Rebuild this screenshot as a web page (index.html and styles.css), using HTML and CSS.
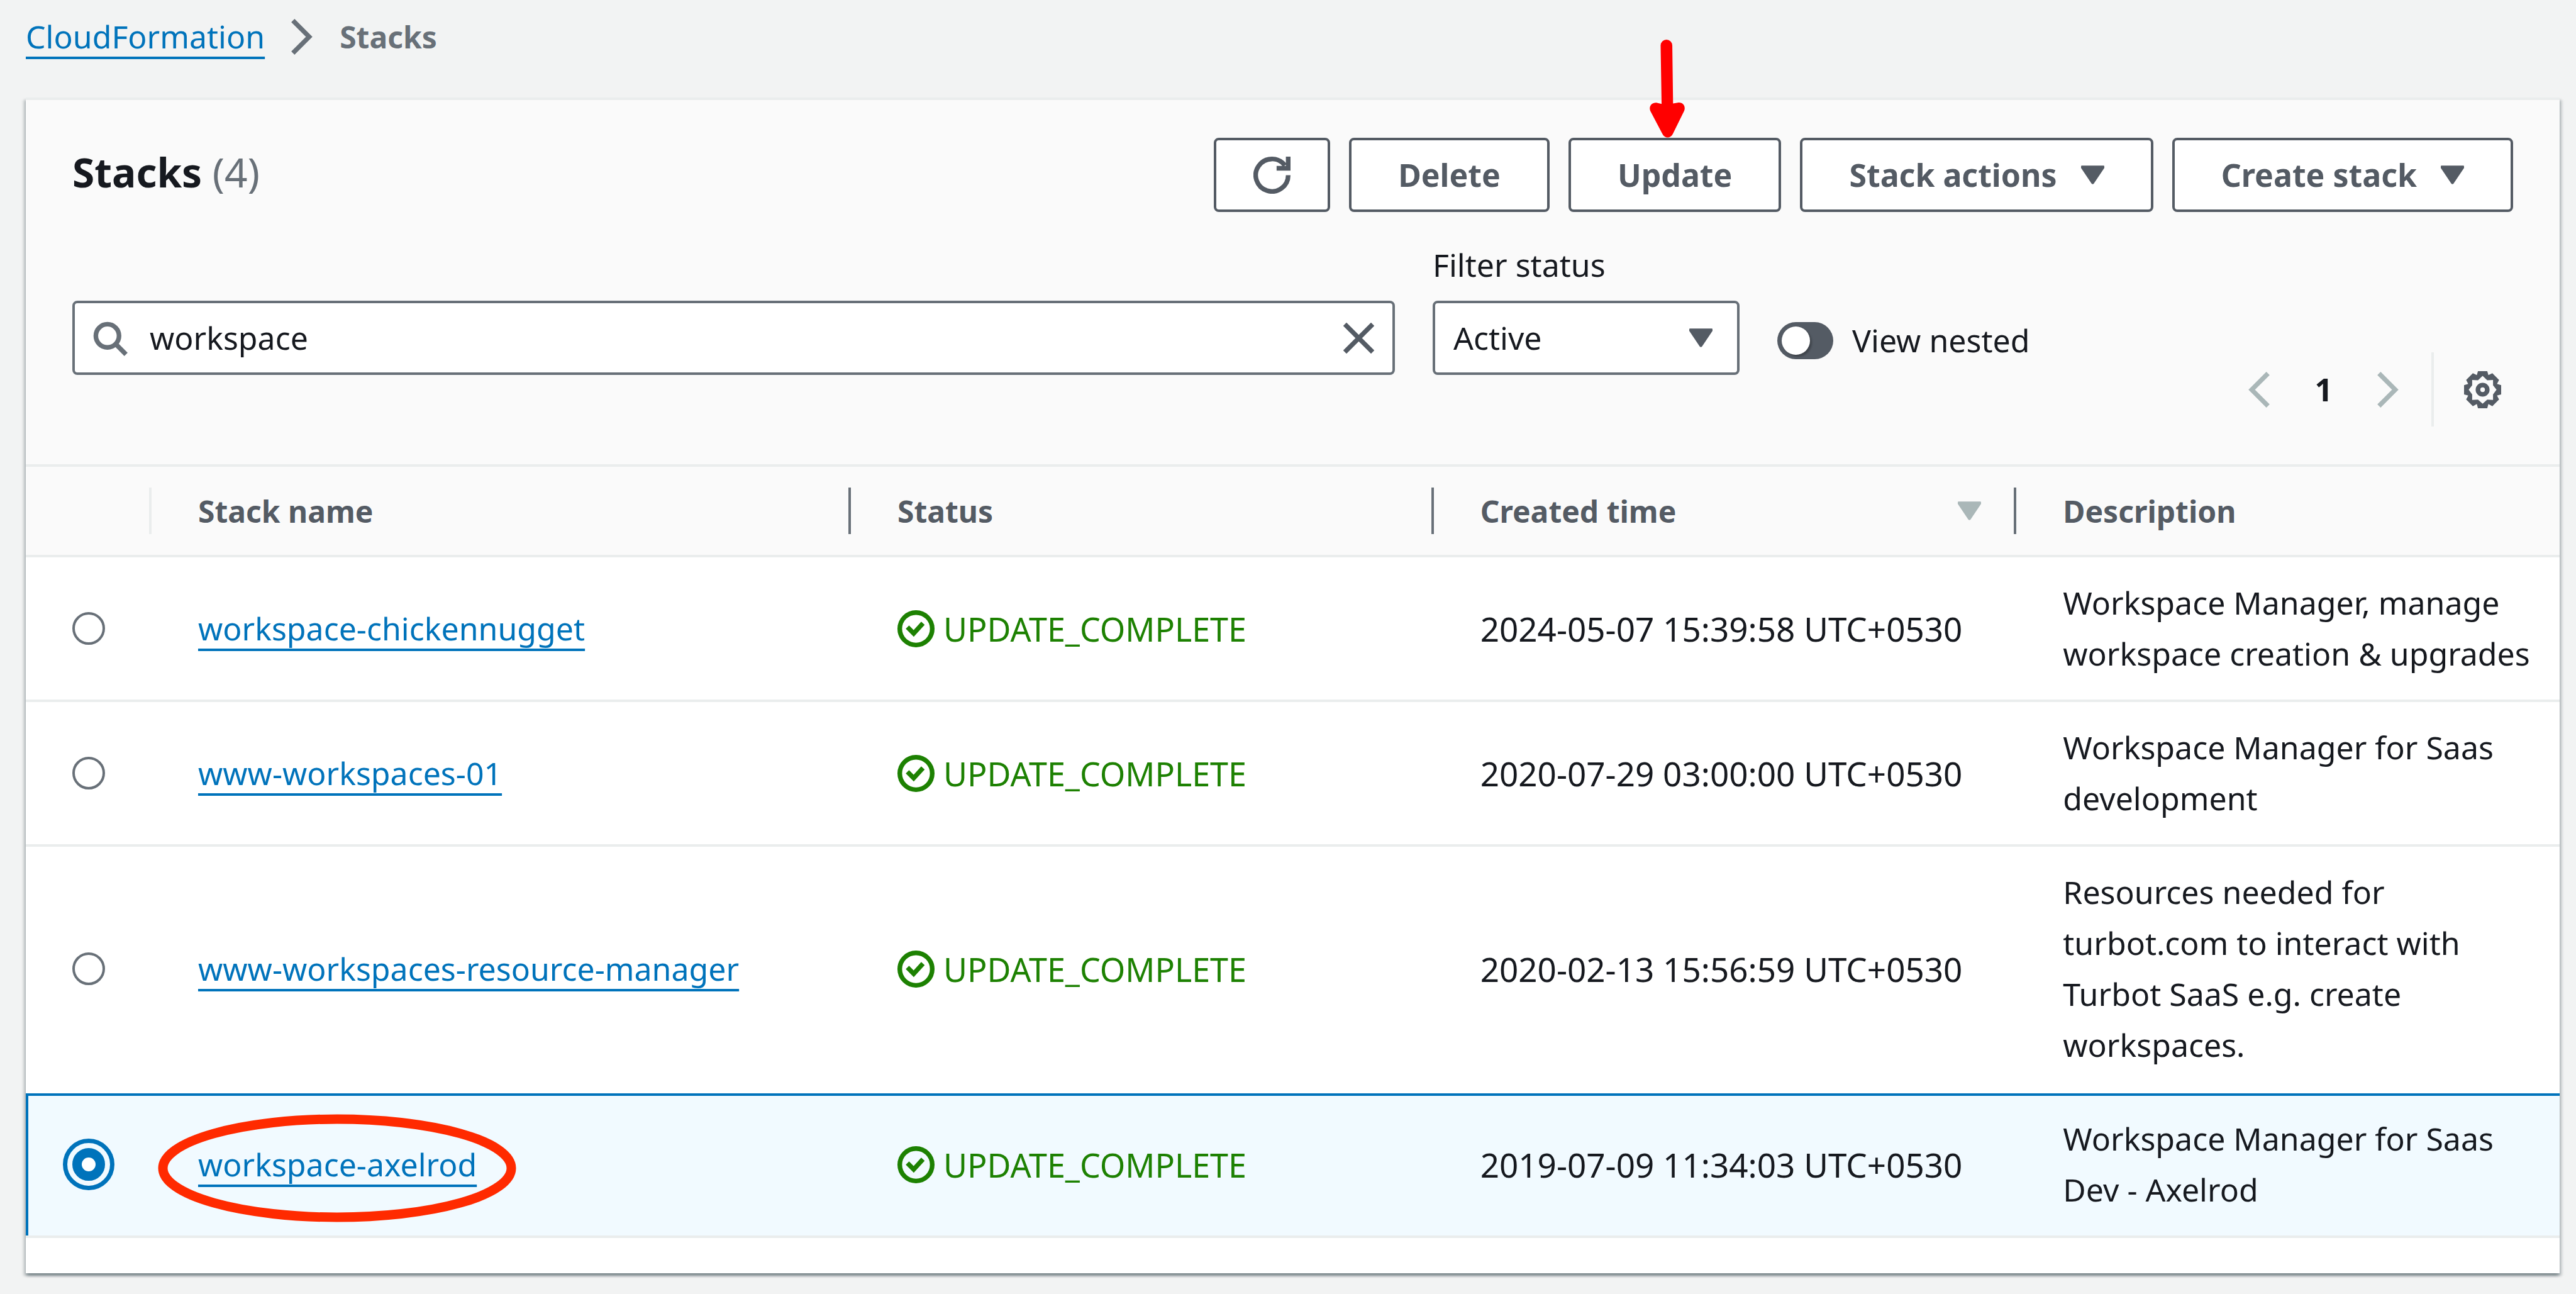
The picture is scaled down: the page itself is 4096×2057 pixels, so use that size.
FILE: index.html
```html
<!DOCTYPE html>
<html lang="en">
<head>
<meta charset="utf-8">
<title>CloudFormation - Stacks</title>
<link rel="stylesheet" href="styles.css">
</head>
<body>
<svg class="sprite" aria-hidden="true">
  <symbol id="caret" viewBox="0 0 10 8"><path d="M.3 0h9.4q.3 0 .3.4v.6L5.5 7.7q-.5.6-1 0L0 1V.4Q0 0 .3 0z"/></symbol>
  <symbol id="next" viewBox="3 0 10 16"><path d="M4 1l7 7-7 7" fill="none" stroke="currentColor" stroke-width="2"/></symbol>
  <symbol id="prev" viewBox="3 0 10 16"><path d="M12 1L5 8l7 7" fill="none" stroke="currentColor" stroke-width="2"/></symbol>
  <symbol id="success" viewBox="0 0 16 16"><g fill="none" stroke="currentColor" stroke-width="2"><circle cx="8" cy="8" r="7"/><path d="M4.3 7.3L7 10l4-4.4"/></g></symbol>
</svg>

<nav class="breadcrumb" aria-label="Breadcrumbs">
  <a class="link" href="#">CloudFormation</a>
  <svg class="chevron" aria-hidden="true"><use href="#next"/></svg>
  <span class="current">Stacks</span>
</nav>

<main class="panel">
  <header class="panel-header">
    <div class="title-row">
      <h1 class="title">Stacks <span class="count">(4)</span></h1>
      <div class="actions">
        <button class="button" type="button" aria-label="Refresh">
          <svg class="icon" viewBox="0 0 16 16" aria-hidden="true"><path d="M15 8a7 7 0 1 1-1.4-4.2M10 5h5V0" fill="none" stroke="currentColor" stroke-width="2"/></svg>
        </button>
        <button class="button" type="button">Delete</button>
        <button class="button" type="button">Update
          <svg class="arrow" viewBox="208 54 180 504" aria-hidden="true"><path d="M264 84a30 30 0 0 1 60 0L328 382l28-5c24-2 38 20 29 43l-58 118c-11 25-43 25-54 0L211 420c-9-24 8-44 32-42l26 6z"/></svg>
        </button>
        <button class="button" type="button">Stack actions<svg class="caret" aria-hidden="true"><use href="#caret"/></svg></button>
        <button class="button" type="button">Create stack<svg class="caret" aria-hidden="true"><use href="#caret"/></svg></button>
      </div>
    </div>

    <div class="tools-row">
      <div class="filters">
        <div class="search">
          <svg class="icon search-icon" viewBox="0 0 16 16" aria-hidden="true"><g fill="none" stroke="currentColor" stroke-width="2"><circle cx="7" cy="7" r="5"/><path d="M10.5 10.5L15 15"/></g></svg>
          <input class="search-input" type="text" value="workspace" aria-label="Filter by stack name">
          <button class="icon-button" type="button" aria-label="Clear"><svg class="icon" viewBox="0 0 16 16" aria-hidden="true"><path d="M2 2l12 12M14 2L2 14" fill="none" stroke="currentColor" stroke-width="2"/></svg></button>
        </div>
        <div class="status-filter">
          <label for="status">Filter status</label>
          <div class="select-box">
            <select id="status" class="select"><option>Active</option></select>
            <svg class="caret" aria-hidden="true"><use href="#caret"/></svg>
          </div>
        </div>
        <label class="nested"><input class="toggle" type="checkbox" role="switch">View nested</label>
      </div>
      <div class="paging">
        <button class="icon-button muted" type="button" aria-label="Previous page"><svg class="chevron" aria-hidden="true"><use href="#prev"/></svg></button>
        <button class="icon-button page" type="button">1</button>
        <button class="icon-button muted" type="button" aria-label="Next page"><svg class="chevron" aria-hidden="true"><use href="#next"/></svg></button>
        <div class="settings">
          <button class="icon-button" type="button" aria-label="Preferences"><svg class="icon" viewBox="0 0 16 16" aria-hidden="true"><path fill="currentColor" fill-rule="evenodd" d="M6 0h4l.5 1.7 1.7-.8 2.9 2.9-.9 1.7L16 6v4l-1.8.5.9 1.7-2.9 2.9-1.7-.9L10 16H6l-.5-1.8-1.7.9-2.9-2.9.9-1.7L0 10V6l1.8-.5-.9-1.7L3.8.9l1.7.8zM8 2L6 3.9l-2.5-.1v2.3L2 8l1.5 2v2.4l2.500-.1L8 14l2-1.700 2.500.1V10L14 8l-1.500-1.900V3.800l-2.500.1z"/><circle cx="8" cy="8" r="2" fill="none" stroke="currentColor" stroke-width="2"/></svg></button>
        </div>
      </div>
    </div>
  </header>

  <table class="stacks">
    <colgroup><col class="col-select"><col class="col-name"><col class="col-data"><col class="col-data"><col></colgroup>
    <thead>
      <tr>
        <th scope="col" aria-label="Selection"><div class="head light"></div></th>
        <th scope="col"><div class="head">Stack name</div></th>
        <th scope="col"><div class="head">Status</div></th>
        <th scope="col"><div class="head">Created time<svg class="caret sort" aria-hidden="true"><use href="#caret"/></svg></div></th>
        <th scope="col"><div class="head last">Description</div></th>
      </tr>
    </thead>
    <tbody>
      <tr>
        <td class="select-cell"><input class="radio" type="radio" name="stack" aria-label="workspace-chickennugget"></td>
        <td><a class="link" href="#">workspace-chickennugget</a></td>
        <td><span class="status"><svg class="icon" aria-hidden="true"><use href="#success"/></svg>UPDATE_COMPLETE</span></td>
        <td class="time">2024-05-07 15:39:58 UTC+0530</td>
        <td>Workspace Manager, manage workspace creation &amp; upgrades</td>
      </tr>
      <tr>
        <td class="select-cell"><input class="radio" type="radio" name="stack" aria-label="www-workspaces-01"></td>
        <td><a class="link" href="#">www-workspaces-01</a></td>
        <td><span class="status"><svg class="icon" aria-hidden="true"><use href="#success"/></svg>UPDATE_COMPLETE</span></td>
        <td class="time">2020-07-29 03:00:00 UTC+0530</td>
        <td>Workspace Manager for Saas development</td>
      </tr>
      <tr class="before-selected">
        <td class="select-cell"><input class="radio" type="radio" name="stack" aria-label="www-workspaces-resource-manager"></td>
        <td><a class="link" href="#">www-workspaces-resource-manager</a></td>
        <td><span class="status"><svg class="icon" aria-hidden="true"><use href="#success"/></svg>UPDATE_COMPLETE</span></td>
        <td class="time">2020-02-13 15:56:59 UTC+0530</td>
        <td>Resources needed for turbot.com to interact with Turbot SaaS e.g. create workspaces.</td>
      </tr>
      <tr class="selected">
        <td class="select-cell"><input class="radio" type="radio" name="stack" aria-label="workspace-axelrod" checked></td>
        <td class="marked"><a class="link" href="#">workspace-axelrod</a>
          <svg class="ring" viewBox="0 0 570 172" aria-hidden="true"><ellipse cx="285" cy="86" rx="277" ry="78"/></svg></td>
        <td><span class="status"><svg class="icon" aria-hidden="true"><use href="#success"/></svg>UPDATE_COMPLETE</span></td>
        <td class="time">2019-07-09 11:34:03 UTC+0530</td>
        <td>Workspace Manager for Saas Dev - Axelrod</td>
      </tr>
    </tbody>
  </table>
</main>
</body>
</html>
```

FILE: styles.css
```css
* { box-sizing: border-box; }

body {
  margin: 0;
  padding: 18px 26px 32px 41px;
  background: #f2f3f3;
  color: #16191f;
  font: 50px/81px "Noto Sans", "Open Sans", sans-serif;
}

button, input, select { font: inherit; color: inherit; margin: 0; }
svg { display: block; flex: none; }

.sprite { position: absolute; width: 0; height: 0; }
.icon { width: 59px; height: 59px; }
.chevron { width: 37px; height: 59px; }
.caret { width: 37px; height: 30px; fill: #545b64; }

.link {
  color: #0073bb;
  text-decoration: underline;
  text-decoration-thickness: 4px;
  text-decoration-skip-ink: none;
  text-underline-offset: 13px;
}

.breadcrumb {
  display: flex;
  align-items: center;
  gap: 41px;
  margin-bottom: 56px;
  color: #687078;
}
.current { font-size: 48px; font-weight: 700; }

.panel {
  background: #fff;
  border-top: 4px solid #eaeded;
  padding-bottom: 56px;
  box-shadow: 0 4px 4px 0 rgba(0, 28, 36, .3), 4px 4px 4px 0 rgba(0, 28, 36, .15), -4px 4px 4px 0 rgba(0, 28, 36, .15);
}

.panel-header { background: #fafafa; padding: 60px 74px; }
.title-row { display: flex; justify-content: space-between; align-items: center; margin-bottom: 44px; }
.title { margin: 0 0 10px; font-size: 64px; font-weight: 700; }
.count { color: #687078; font-weight: 400; }
.actions { display: flex; gap: 30px; }

.button {
  position: relative;
  display: flex;
  align-items: center;
  gap: 38px;
  height: 118px;
  padding: 0 74px;
  background: #fff;
  border: 4px solid #545b64;
  border-radius: 8px;
  color: #545b64;
  font-weight: 700;
  white-space: nowrap;
}
.button:first-child { padding: 0 59px; }
.arrow { position: absolute; left: 125px; bottom: 114px; width: 56px; height: 156px; fill: #f00; }

.tools-row { display: flex; justify-content: space-between; align-items: flex-end; }
.filters { flex: 1; display: flex; align-items: flex-end; gap: 60px; margin-bottom: 82px; }

.search {
  flex: 0 1 2103px;
  display: flex;
  align-items: center;
  gap: 34px;
  height: 118px;
  padding: 0 24px 0 26px;
  background: #fff;
  border: 4px solid #687078;
  border-radius: 8px;
}
.search-icon { color: #687078; }
.search-input { flex: 1; min-width: 0; height: 100%; padding: 0; border: 0; background: none; outline: 0; }

.icon-button { display: flex; padding: 0; border: 0; background: none; color: #545b64; }
.muted { color: #aab7b8; }

.status-filter { display: grid; gap: 16px; flex: 0 0 488px; }
.select-box { position: relative; display: flex; align-items: center; }
.select {
  appearance: none;
  width: 100%;
  height: 118px;
  padding: 0 120px 0 29px;
  background: #fff;
  border: 4px solid #687078;
  border-radius: 8px;
}
.select-box .caret { position: absolute; right: 43px; pointer-events: none; }

.nested { display: flex; align-items: center; gap: 30px; height: 118px; padding-top: 8px; white-space: nowrap; }
.toggle {
  appearance: none;
  flex: none;
  display: flex;
  align-items: center;
  width: 89px;
  height: 59px;
  padding: 0 7px;
  border-radius: 30px;
  background: #545b64;
}
.toggle::before { content: ""; width: 45px; height: 45px; border-radius: 50%; background: #fff; box-shadow: 3px 3px 3px rgba(0, 0, 0, .25); }

.paging { display: flex; align-items: center; gap: 70px; }
.page { color: #16191f; font-weight: 700; }
.settings {
  display: flex;
  align-items: center;
  height: 118px;
  margin-left: -20px;
  padding: 0 19px 0 48px;
  border-left: 4px solid #eaeded;
}

.stacks { width: 100%; table-layout: fixed; border-collapse: separate; border-spacing: 0; }
.col-select { width: 200px; }
.col-name { width: 1112px; }
.col-data { width: 23%; }

.stacks th {
  height: 148px;
  padding: 0;
  background: #fafafa;
  border-top: 4px solid #eaeded;
  border-bottom: 4px solid #eaeded;
}
.head {
  display: flex;
  align-items: center;
  justify-content: space-between;
  height: 74px;
  padding: 0 52px 0 74px;
  border-right: 4px solid #687078;
  color: #545b64;
  font-size: 48px;
  text-align: left;
}
.light { border-color: #eaeded; }
.last { border-right: 0; }
.sort { fill: #aab7b8; }

.stacks td { padding: 32px 38px 32px 74px; border-bottom: 4px solid #eaeded; }
.stacks .time { padding-right: 0; font-size: 53px; white-space: nowrap; }
.before-selected td { border-bottom-color: transparent; }
.selected td { padding-top: 28px; background: #f1faff; border-top: 4px solid #0073bb; }
.selected .select-cell { box-shadow: inset 4px 0 #0073bb; }

.radio {
  appearance: none;
  display: block;
  width: 52px;
  height: 52px;
  border: 4px solid #687078;
  border-radius: 50%;
  background: #fff;
}
.radio:checked {
  border: 15px solid #0073bb;
  outline: 7px solid #0073bb;
  outline-offset: 8px;
}

.status { display: flex; align-items: center; gap: 14px; color: #1d8102; font-size: 52px; }

.marked { position: relative; }
.ring { position: absolute; left: 10px; top: 29px; width: 570px; height: 172px; fill: none; stroke: #ff2a00; stroke-width: 15px; }
```
